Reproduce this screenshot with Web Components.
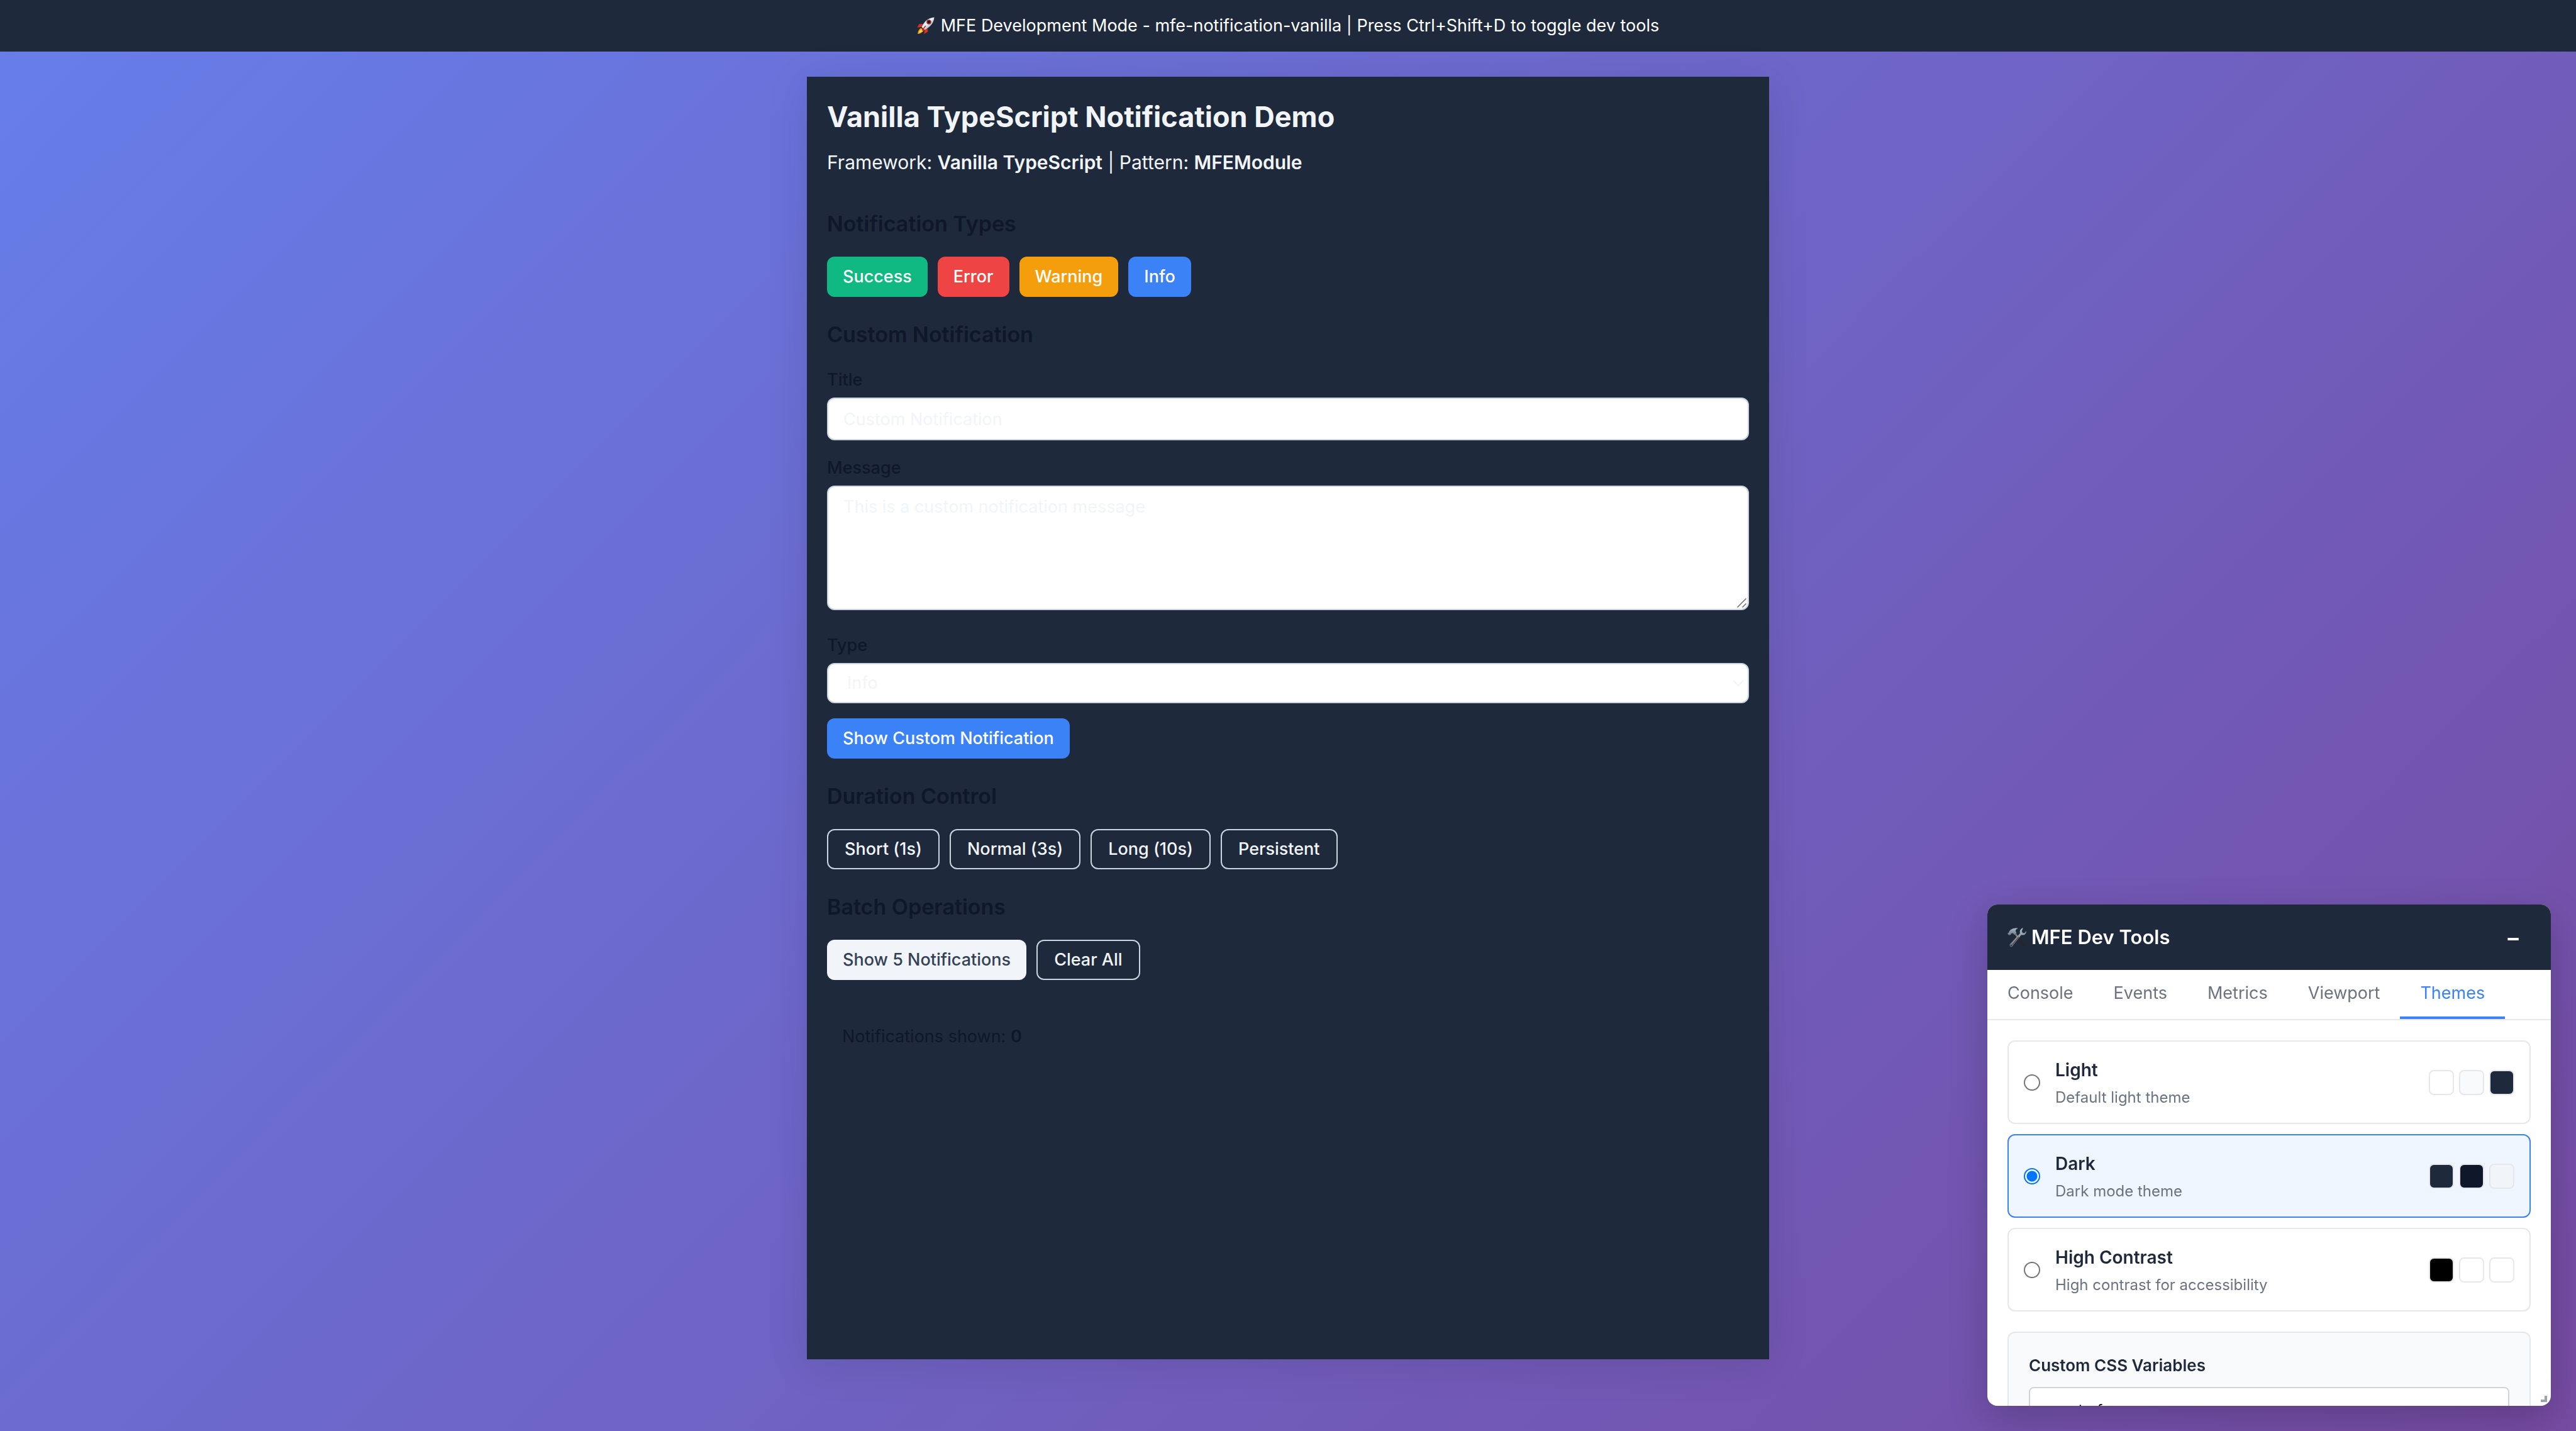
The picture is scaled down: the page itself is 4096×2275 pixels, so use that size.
<!DOCTYPE html>
<html lang="en">
<head>
<meta charset="utf-8">
<title>MFE Development Mode</title>
<style>
  :root {
    --ink: #1e293b;
    --ink-deep: #0f172a;
    --paper: #f1f5f9;
    --line: #cbd5e1;
    --hairline: #e5e7eb;
    --muted: #6b7280;
    --blue: #3b82f6;
  }
  html, body { height: 100%; margin: 0; }
  body {
    font: 400 27px/36px Inter, "Liberation Sans", sans-serif;
    color: var(--paper);
    background: linear-gradient(135deg, #667eea 0%, #764ba2 100%);
    overflow: hidden;
  }
</style>
</head>
<body>
<mfe-shell>
  <dev-banner slot="banner">MFE Development Mode - mfe-notification-vanilla | Press Ctrl+Shift+D to toggle dev tools</dev-banner>
  <notification-demo></notification-demo>
</mfe-shell>
<dev-tools></dev-tools>

<template id="t-shell">
  <style>
    :host { display: flex; flex-direction: column; min-height: 100%; }
    main { flex: 1; display: flex; flex-direction: column; align-items: center; padding: 40px 40px 114px; }
    ::slotted(notification-demo) { flex: 1; width: 100%; max-width: 1530px; }
  </style>
  <slot name="banner"></slot>
  <main><slot></slot></main>
</template>

<template id="t-banner">
  <style>
    :host { display: flex; justify-content: center; align-items: center; gap: 10px; height: 82px; background: var(--ink); color: #fff; }
    svg { display: block; width: 28px; height: 28px; }
  </style>
  <svg viewBox="0 0 28 28" aria-hidden="true">
    <defs><linearGradient id="hull" x1="0" y1="0" x2="1" y2="1">
      <stop offset="0" stop-color="#6fb4e4"/><stop offset=".45" stop-color="#eef3f7"/><stop offset="1" stop-color="#6c7f92"/>
    </linearGradient></defs>
    <path d="M9 11 3.500 11.200 0.500 17 8 15.500Z" fill="#e0301e"/>
    <path d="M16.500 18 17.500 23 11.500 27 12 20Z" fill="#e0301e"/>
    <path d="M8 17C4 18 1.500 22 1.200 27 6 26.500 10 24 11 20Z" fill="#f59a1b"/>
    <path d="M8 19C5.500 20 3.500 23 3 25.500 6 25 8.500 23 9.500 21Z" fill="#ffe14a"/>
    <path d="M27.500.5C20 1 12 5.500 7.500 16L12 20.500C22 16 27 8.500 27.500.5Z" fill="url(#hull)"/>
    <path d="M7.500 16 12 20.500 10.500 21.500 6.500 17.500Z" fill="#7b1c16"/>
    <circle cx="19" cy="8" r="3.800" fill="#c22a22"/>
    <circle cx="19" cy="8" r="2.400" fill="#14202e"/>
    <path d="M13.500 14.500 8.500 21" stroke="#c22a22" stroke-width="1.600" stroke-linecap="round"/>
  </svg>
  <span><slot></slot></span>
</template>

<template id="t-section">
  <style>
    :host { display: block; }
    h2 { margin: 0 0 30px; font-size: 34px; line-height: 44px; font-weight: 600; color: var(--ink-deep); }
    .body { display: flex; flex-wrap: wrap; gap: 16px; }
    :host([stacked]) .body { flex-direction: column; gap: 24px; align-items: stretch; flex-wrap: nowrap; }
  </style>
  <h2></h2>
  <div class="body"><slot></slot></div>
</template>

<template id="t-button">
  <style>
    :host { display: block; --bg: var(--blue); --fg: #fff; }
    :host([kind=success]) { --bg: #10b981; }
    :host([kind=error]) { --bg: #ef4444; }
    :host([kind=warning]) { --bg: #f59e0b; }
    :host([kind=secondary]) { --bg: var(--paper); --fg: #334155; }
    :host([kind=outline]) { --bg: transparent; --fg: var(--paper); }
    button { display: block; height: 64px; padding: 0 25px; border: 0; border-radius: 12px; background: var(--bg); color: var(--fg); font: inherit; font-weight: 500; }
    :host([kind=outline]) button { padding: 0 26px; border: 2px solid var(--line); }
  </style>
  <button type="button"><slot></slot></button>
</template>

<template id="t-demo">
  <style>
    :host { display: block; box-sizing: border-box; padding: 32px; background: var(--ink); box-shadow: 0 8px 64px rgba(0, 0, 0, .1); }
    header { margin-bottom: 52px; }
    h1 { margin: 0 0 16px; font-size: 45px; line-height: 64px; font-weight: 700; }
    p { margin: 0; }
    header p { font-size: 30px; line-height: 48px; }
    header strong { font-weight: 600; }
    .sections { display: flex; flex-direction: column; gap: 38px; }
    .field { display: flex; flex-direction: column; gap: 8px; }
    .field.tall { margin-bottom: 12px; }
    label { line-height: 40px; font-weight: 500; color: var(--ink-deep); }
    input, textarea, select {
      display: block; box-sizing: border-box; width: 100%; margin: 0; padding: 16px 24px;
      border: 2px solid var(--line); border-radius: 12px; background: #fff; color: var(--paper);
      font: inherit; line-height: 32px; appearance: none; outline: 0;
    }
    input { height: 68px; }
    textarea { height: 198px; resize: none; }
    select { height: 64px; padding: 0 64px 0 30px; }
    .wrap { position: relative; }
    .grip, .chevron { position: absolute; pointer-events: none; }
    .grip { right: 4px; bottom: 4px; width: 15px; height: 15px; }
    .chevron { right: 8px; top: 26px; width: 18px; height: 12px; }
    .action { display: flex; }
    .status { margin-top: 48px; padding: 24px; color: var(--ink-deep); }
    .status strong { font-weight: 600; }
  </style>
  <header>
    <h1>Vanilla TypeScript Notification Demo</h1>
    <p>Framework: <strong>Vanilla TypeScript</strong> | Pattern: <strong>MFEModule</strong></p>
  </header>
  <div class="sections">
    <demo-section heading="Notification Types">
      <demo-button kind="success">Success</demo-button>
      <demo-button kind="error">Error</demo-button>
      <demo-button kind="warning">Warning</demo-button>
      <demo-button kind="info">Info</demo-button>
    </demo-section>
    <demo-section heading="Custom Notification" stacked>
      <div class="field">
        <label for="title">Title</label>
        <input id="title" type="text" value="Custom Notification">
      </div>
      <div class="field tall">
        <label for="message">Message</label>
        <div class="wrap">
          <textarea id="message">This is a custom notification message</textarea>
          <svg class="grip" viewBox="0 0 15 15" aria-hidden="true"><path d="M.5 14.500 14.500.5M8.500 14.500l6-6" stroke="#6b6b6b" stroke-width="1.500" fill="none"/></svg>
        </div>
      </div>
      <div class="field">
        <label for="type">Type</label>
        <div class="wrap">
          <select id="type"><option selected>Info</option><option>Success</option><option>Warning</option><option>Error</option></select>
          <svg class="chevron" viewBox="0 0 18 12" aria-hidden="true"><path d="M1 2l8 8 8-8" stroke="#f1f5f9" stroke-width="2" fill="none"/></svg>
        </div>
      </div>
      <div class="action"><demo-button>Show Custom Notification</demo-button></div>
    </demo-section>
    <demo-section heading="Duration Control">
      <demo-button kind="outline">Short (1s)</demo-button>
      <demo-button kind="outline">Normal (3s)</demo-button>
      <demo-button kind="outline">Long (10s)</demo-button>
      <demo-button kind="outline">Persistent</demo-button>
    </demo-section>
    <demo-section heading="Batch Operations">
      <demo-button kind="secondary">Show 5 Notifications</demo-button>
      <demo-button kind="outline">Clear All</demo-button>
    </demo-section>
  </div>
  <p class="status">Notifications shown: <strong>0</strong></p>
</template>

<template id="t-swatches">
  <style>
    :host { display: flex; gap: 8px; }
    i { box-sizing: border-box; width: 40px; height: 40px; border: 2px solid var(--hairline); border-radius: 8px; }
  </style>
</template>

<template id="t-themes">
  <style>
    :host { display: flex; flex-direction: column; gap: 32px; }
    fieldset { display: flex; flex-direction: column; gap: 16px; margin: 0; padding: 0; border: 0; min-width: 0; }
    label { display: flex; align-items: center; gap: 24px; box-sizing: border-box; min-height: 133px; padding: 0 24px; border: 2px solid var(--hairline); border-radius: 12px; }
    label:has(:checked) { border-color: var(--blue); background: #eff6ff; }
    input { appearance: none; box-sizing: border-box; flex: none; width: 26px; height: 26px; margin: 0; border: 2px solid #767676; border-radius: 50%; background: #fff; }
    input:checked { border-color: #0075ff; background: radial-gradient(circle, #0075ff 0 8px, #fff 9px); }
    .text { flex: 1; display: flex; flex-direction: column; gap: 6px; }
    .name { font-size: 28px; line-height: 42px; font-weight: 600; color: var(--ink); }
    .desc { font-size: 24px; line-height: 34px; color: var(--muted); }
    .custom { padding: 32px; border: 2px solid var(--hairline); border-radius: 12px; background: #f8fafc; }
    h4 { margin: 0 0 14px; font-size: 26px; line-height: 40px; font-weight: 600; color: var(--ink); }
    textarea { display: block; box-sizing: border-box; width: 100%; height: 240px; padding: 16px; border: 2px solid #d1d5db; border-radius: 8px; background: #fff; color: #000; font: 24px/40px "DejaVu Sans Mono", monospace; resize: none; }
  </style>
  <fieldset aria-label="Theme">
    <label><input type="radio" name="theme"><span class="text"><span class="name">Light</span><span class="desc">Default light theme</span></span><theme-swatches colors="#ffffff #f8fafc #1e293b"></theme-swatches></label>
    <label><input type="radio" name="theme" checked><span class="text"><span class="name">Dark</span><span class="desc">Dark mode theme</span></span><theme-swatches colors="#1e293b #0f172a #f1f5f9"></theme-swatches></label>
    <label><input type="radio" name="theme"><span class="text"><span class="name">High Contrast</span><span class="desc">High contrast for accessibility</span></span><theme-swatches colors="#000000 #ffffff #ffffff"></theme-swatches></label>
  </fieldset>
  <div class="custom">
    <h4 id="vars">Custom CSS Variables</h4>
    <textarea aria-labelledby="vars">:root {</textarea>
  </div>
</template>

<template id="t-tools">
  <style>
    :host { position: fixed; right: 40px; bottom: 40px; display: flex; flex-direction: column; width: 896px; height: 797px; border-radius: 16px; overflow: hidden; background: #fff; box-shadow: 0 20px 64px rgba(0, 0, 0, .2); }
    header { flex: none; display: flex; align-items: center; gap: 8px; height: 104px; padding: 0 32px; background: var(--ink); box-sizing: border-box; }
    header svg { width: 30px; height: 31px; }
    h3 { flex: 1; margin: 0; font-size: 31px; line-height: 40px; font-weight: 600; color: #fff; }
    header button { width: 56px; height: 48px; padding: 0; border: 0; background: none; color: #fff; font: inherit; font-size: 36px; font-weight: 600; }
    nav { flex: none; display: flex; height: 80px; box-sizing: border-box; border-bottom: 2px solid var(--hairline); }
    nav button { padding: 0 32px; border: 0; border-bottom: 4px solid transparent; background: none; color: var(--muted); font: inherit; }
    nav button[aria-selected=true] { color: var(--blue); border-color: var(--blue); }
    .content { flex: 1; min-height: 0; overflow: hidden; padding: 32px; }
    .corner { position: absolute; right: 6px; bottom: 6px; width: 10px; height: 10px; box-sizing: border-box; border: solid #9ca3af; border-width: 0 4px 4px 0; }
  </style>
  <header>
    <svg viewBox="0 0 30 31" aria-hidden="true">
      <defs><linearGradient id="steel" x1="0" y1="0" x2="0" y2="1"><stop offset="0" stop-color="#a9bac6"/><stop offset="1" stop-color="#6a7882"/></linearGradient></defs>
      <path d="M12 10 14 8.500 28.500 28 26 30.500 12.500 13Z" fill="#24272a"/>
      <path d="M12 11 14 9.500 18.500 15.500 16.500 17.500Z" fill="#8b8078"/>
      <path d="M0 9C1 8.500 2 8 2.500 6.500 5 2 10 0 17 .7 13.500 2 12.500 3.500 13 5.500L14.500 8.500 11.500 11.500 8.500 8.500C6 8.500 5.500 9.500 5.200 11L2.500 12Z" fill="url(#steel)"/>
      <path d="M25 .2C21 1 18.800 4.500 20 8.800L4 26C2.500 28.500 5 31.500 7.500 29.800L22 11.300C26.500 12.500 30 10 29.800 5L27.300 8.500 24 8.300 22.800 5Z" fill="url(#steel)"/>
      <path d="M18 14.500 8 27" stroke="#6d4548" stroke-width="1.500"/>
      <circle cx="6" cy="28" r="1.300" fill="#2c343b"/>
    </svg>
    <h3>MFE Dev Tools</h3>
    <button type="button" aria-label="Minimize">−</button>
  </header>
  <nav role="tablist">
    <button type="button" role="tab" aria-selected="false">Console</button>
    <button type="button" role="tab" aria-selected="false">Events</button>
    <button type="button" role="tab" aria-selected="false">Metrics</button>
    <button type="button" role="tab" aria-selected="false">Viewport</button>
    <button type="button" role="tab" aria-selected="true">Themes</button>
  </nav>
  <div class="content"><theme-picker></theme-picker></div>
  <span class="corner"></span>
</template>

<script>
  const define = (name, templateId, setup) => customElements.define(name, class extends HTMLElement {
    constructor() {
      super();
      this.attachShadow({ mode: 'open' }).append(document.getElementById(templateId).content.cloneNode(true));
    }
    connectedCallback() {
      if (setup && !this.ready) { this.ready = true; setup(this, this.shadowRoot); }
    }
  });

  define('theme-swatches', 't-swatches', (host, root) => {
    for (const color of host.getAttribute('colors').split(' ')) {
      const chip = document.createElement('i');
      chip.style.background = color;
      root.append(chip);
    }
  });
  define('demo-button', 't-button');
  define('demo-section', 't-section', (host, root) => {
    root.querySelector('h2').textContent = host.getAttribute('heading');
  });
  define('theme-picker', 't-themes');
  define('notification-demo', 't-demo');
  define('dev-banner', 't-banner');
  define('mfe-shell', 't-shell');
  define('dev-tools', 't-tools', (host, root) => {
    const tabs = [...root.querySelectorAll('[role=tab]')];
    tabs.forEach(tab => tab.addEventListener('click', () =>
      tabs.forEach(t => t.setAttribute('aria-selected', String(t === tab)))));
  });
</script>
</body>
</html>
